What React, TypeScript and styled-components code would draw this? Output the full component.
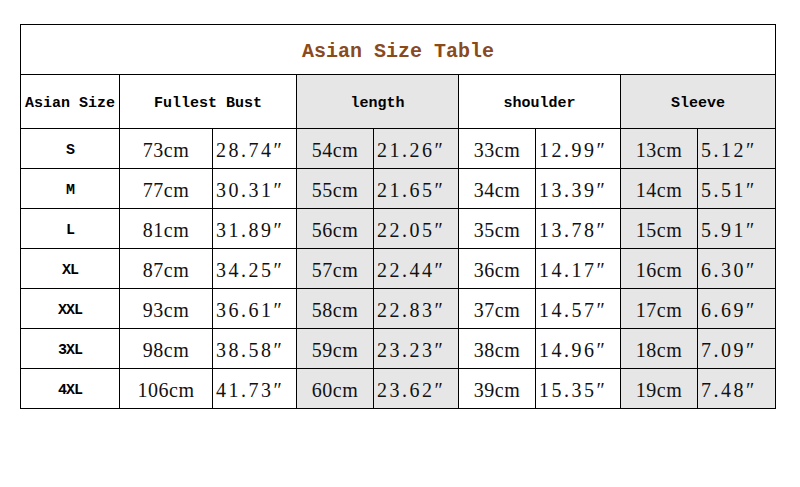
import React from 'react';
import styled, { createGlobalStyle } from 'styled-components';

const GlobalStyle = createGlobalStyle`
  html, body {
    margin: 0;
    padding: 0;
    background: #fff;
  }
`;

const Page = styled.div`
  width: 800px;
  height: 487px;
  padding: 24px 0 0 20px;
  box-sizing: border-box;
  background: #fff;
`;

const Table = styled.table`
  width: 755px;
  border-collapse: collapse;
  table-layout: fixed;
  border: 1px solid #000;
`;

const TitleCell = styled.th`
  height: 46px;
  padding: 3px 0 0;
  border: 1px solid #000;
  font-family: 'Liberation Mono', 'DejaVu Sans Mono', monospace;
  font-size: 20px;
  font-weight: bold;
  color: #8b4a1c;
  text-align: center;
  vertical-align: middle;
`;

const HeadCell = styled.th<{ $shade?: boolean }>`
  height: 50px;
  padding: 3px 0 0;
  border: 1px solid #000;
  background: ${(p) => (p.$shade ? '#e6e6e6' : '#fff')};
  font-family: 'Liberation Mono', 'DejaVu Sans Mono', monospace;
  font-size: 15px;
  font-weight: bold;
  color: #000;
  text-align: center;
  vertical-align: middle;
  white-space: nowrap;
`;

const SizeCell = styled.td`
  height: 36px;
  padding: 3px 0 0;
  border: 1px solid #000;
  font-family: 'Liberation Mono', 'DejaVu Sans Mono', monospace;
  font-size: 15px;
  font-weight: bold;
  letter-spacing: -1px;
  text-align: center;
  vertical-align: middle;
`;

const CmCell = styled.td<{ $shade?: boolean }>`
  height: 36px;
  padding: 3px 0 0;
  border: 1px solid #000;
  background: ${(p) => (p.$shade ? '#e6e6e6' : '#fff')};
  font-family: 'Liberation Serif', 'DejaVu Serif', serif;
  font-size: 20px;
  letter-spacing: 0.5px;
  color: #111;
  text-align: center;
  vertical-align: middle;
`;

const InchCell = styled(CmCell)`
  padding-left: 3px;
  text-align: left;
  letter-spacing: 2.5px;
`;

interface Row {
  size: string;
  bust: [string, string];
  length: [string, string];
  shoulder: [string, string];
  sleeve: [string, string];
}

const rows: Row[] = [
  { size: 'S', bust: ['73cm', '28.74″'], length: ['54cm', '21.26″'], shoulder: ['33cm', '12.99″'], sleeve: ['13cm', '5.12″'] },
  { size: 'M', bust: ['77cm', '30.31″'], length: ['55cm', '21.65″'], shoulder: ['34cm', '13.39″'], sleeve: ['14cm', '5.51″'] },
  { size: 'L', bust: ['81cm', '31.89″'], length: ['56cm', '22.05″'], shoulder: ['35cm', '13.78″'], sleeve: ['15cm', '5.91″'] },
  { size: 'XL', bust: ['87cm', '34.25″'], length: ['57cm', '22.44″'], shoulder: ['36cm', '14.17″'], sleeve: ['16cm', '6.30″'] },
  { size: 'XXL', bust: ['93cm', '36.61″'], length: ['58cm', '22.83″'], shoulder: ['37cm', '14.57″'], sleeve: ['17cm', '6.69″'] },
  { size: '3XL', bust: ['98cm', '38.58″'], length: ['59cm', '23.23″'], shoulder: ['38cm', '14.96″'], sleeve: ['18cm', '7.09″'] },
  { size: '4XL', bust: ['106cm', '41.73″'], length: ['60cm', '23.62″'], shoulder: ['39cm', '15.35″'], sleeve: ['19cm', '7.48″'] },
];

const colWidths = [99, 93, 84, 77, 85, 77, 85, 77, 78];

const App: React.FC = () => {
  return (
    <Page>
      <GlobalStyle />
      <Table>
        <colgroup>
          {colWidths.map((w, i) => (
            <col key={i} style={{ width: w }} />
          ))}
        </colgroup>
        <thead>
          <tr>
            <TitleCell colSpan={9}>Asian Size Table</TitleCell>
          </tr>
          <tr>
            <HeadCell>Asian Size</HeadCell>
            <HeadCell colSpan={2}>Fullest Bust</HeadCell>
            <HeadCell colSpan={2} $shade>length</HeadCell>
            <HeadCell colSpan={2}>shoulder</HeadCell>
            <HeadCell colSpan={2} $shade>Sleeve</HeadCell>
          </tr>
        </thead>
        <tbody>
          {rows.map((r) => (
            <tr key={r.size}>
              <SizeCell>{r.size}</SizeCell>
              <CmCell>{r.bust[0]}</CmCell>
              <InchCell>{r.bust[1]}</InchCell>
              <CmCell $shade>{r.length[0]}</CmCell>
              <InchCell $shade>{r.length[1]}</InchCell>
              <CmCell>{r.shoulder[0]}</CmCell>
              <InchCell>{r.shoulder[1]}</InchCell>
              <CmCell $shade>{r.sleeve[0]}</CmCell>
              <InchCell $shade>{r.sleeve[1]}</InchCell>
            </tr>
          ))}
        </tbody>
      </Table>
    </Page>
  );
};

export default App;
